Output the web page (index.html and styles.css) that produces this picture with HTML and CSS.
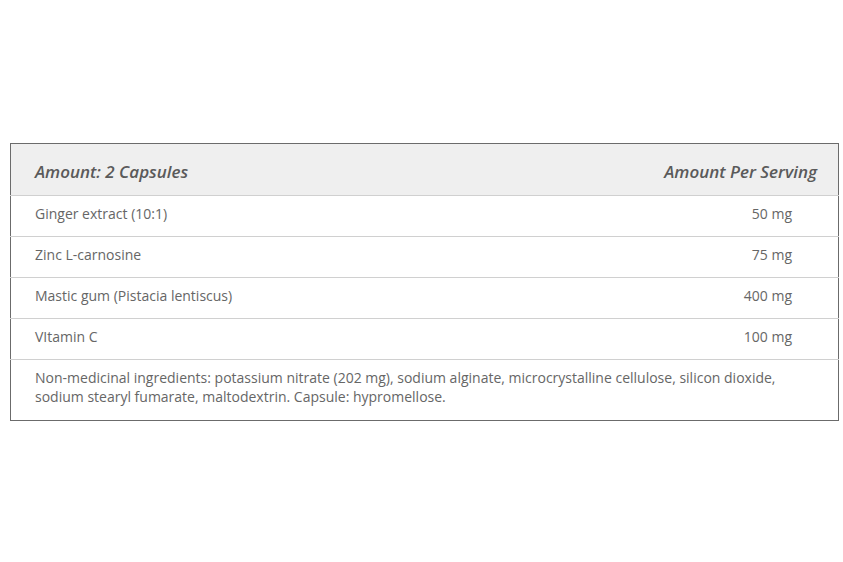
FILE: index.html
```html
<!DOCTYPE html>
<html>
<head>
<meta charset="utf-8">
<link rel="stylesheet" href="styles.css">
</head>
<body>
<table class="facts">
  <thead>
    <tr class="head">
      <th class="name">Amount: 2 Capsules</th>
      <th class="amt">Amount Per Serving</th>
    </tr>
  </thead>
  <tbody>
    <tr class="row"><td class="name">Ginger extract (10:1)</td><td class="amt">50 mg</td></tr>
    <tr class="row"><td class="name">Zinc L-carnosine</td><td class="amt">75 mg</td></tr>
    <tr class="row"><td class="name">Mastic gum (Pistacia lentiscus)</td><td class="amt">400 mg</td></tr>
    <tr class="row"><td class="name">VItamin C</td><td class="amt">100 mg</td></tr>
    <tr class="foot"><td colspan="2">Non-medicinal ingredients: potassium nitrate (202 mg), sodium alginate, microcrystalline cellulose, silicon dioxide, sodium stearyl fumarate, maltodextrin. Capsule: hypromellose.</td></tr>
  </tbody>
</table>
</body>
</html>
```
FILE: styles.css
```css
html, body {
  margin: 0;
  padding: 0;
  background: #fff;
}
body {
  padding: 143px 0 0 10px;
  font-family: "Open Sans", "Liberation Sans", sans-serif;
  color: #666;
}
.facts {
  width: 829px;
  border-collapse: collapse;
  border: 1px solid #6b6b6b;
  font-size: 14px;
}
.head {
  background: #efefef;
}
.head th {
  height: 48px;
  padding: 0;
  font-style: italic;
  font-weight: 600;
  font-size: 17px;
  color: #5a5a5a;
  vertical-align: middle;
  padding-top: 3px;
}
.head th.name {
  text-align: left;
  padding-left: 24px;
}
.head th.amt {
  text-align: right;
  padding-right: 21px;
}
.row td {
  height: 35px;
  padding: 0;
  border-top: 1px solid #d0d0d0;
  vertical-align: middle;
  padding-bottom: 5px;
}
.row td.name {
  padding-left: 24px;
  text-align: left;
}
.row td.amt {
  text-align: right;
  padding-right: 46px;
}
.foot td {
  border-top: 1px solid #d0d0d0;
  padding: 8px 24px 14px 24px;
  line-height: 19px;
  height: 38px;
}
```
